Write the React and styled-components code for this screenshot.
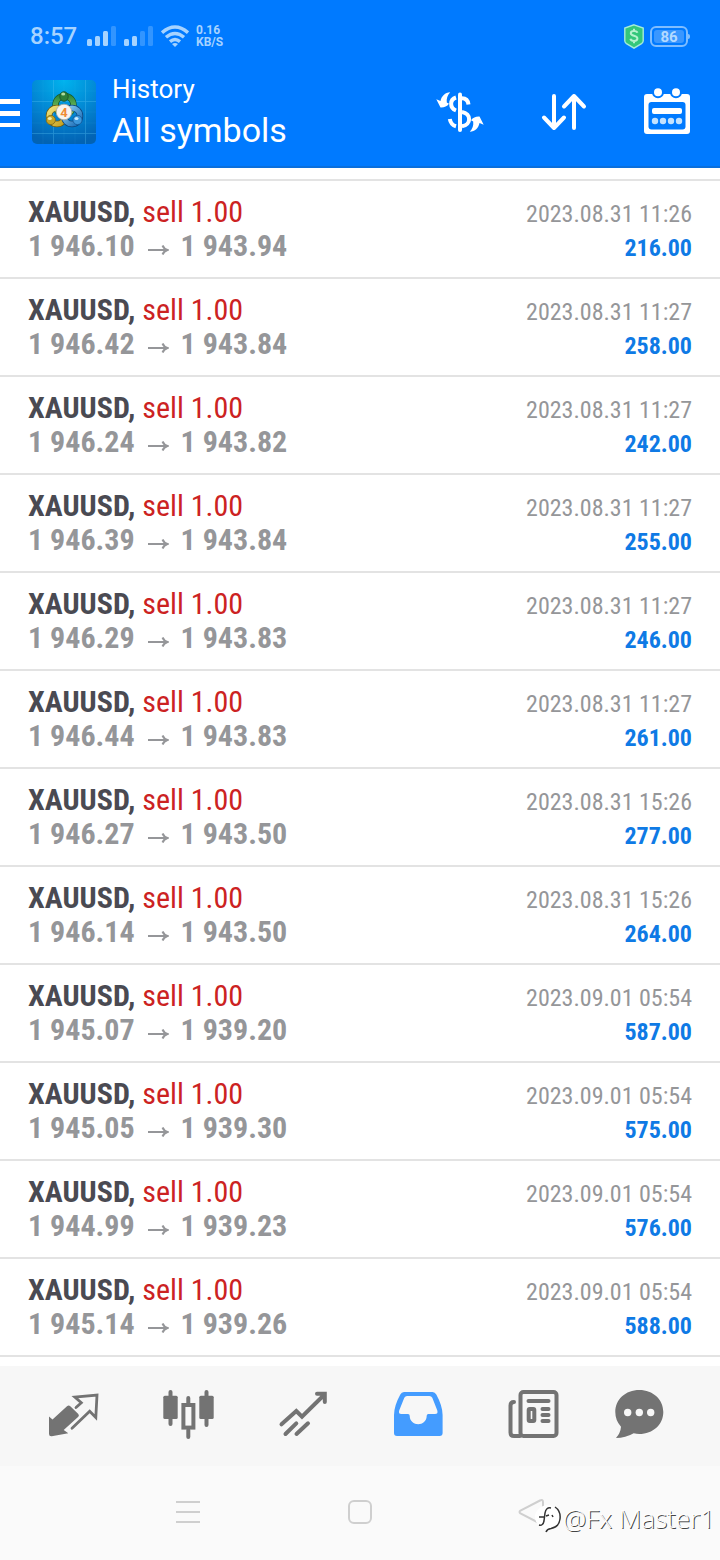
import { useState } from "react"
import styled, { createGlobalStyle } from "styled-components"

const GlobalStyle = createGlobalStyle`
  * {
    box-sizing: border-box;
  }

  body {
    margin: 0;
    background: #ffffff;
    font-family: Roboto, "Liberation Sans", sans-serif;
  }

  button {
    padding: 0;
    border: none;
    background: transparent;
    cursor: pointer;
  }

  svg {
    display: block;
    flex-shrink: 0;
  }
`

const Page = styled.div`
  position: relative;
  min-height: 100vh;
  display: flex;
  flex-direction: column;
`

const Header = styled.header`
  background: #007aff;
  border-bottom: 2px solid #0a6fdc;
`

const StatusBar = styled.div`
  display: flex;
  align-items: center;
  height: 72px;
  padding: 0 32px 0 30px;
  color: #a6d3ff;
`

const Clock = styled.span`
  width: 57px;
  font-size: 24px;
  line-height: 28px;
  font-weight: 500;
`

const StatusIcons = styled.div`
  display: flex;
  align-items: center;
  gap: 8px;
`

const Speed = styled.div`
  margin-left: 7px;
  font-size: 12px;
  line-height: 12px;
  font-weight: 700;
`

const StatusRight = styled.div`
  display: flex;
  align-items: center;
  gap: 6px;
  margin-left: auto;
`

const Battery = styled.div`
  position: relative;
  width: 38px;
  height: 21px;
  padding: 2px;
  border: 2px solid #7fbdff;
  border-radius: 6px;

  &::after {
    content: "";
    position: absolute;
    top: 6px;
    right: -4px;
    width: 2px;
    height: 5px;
    border-radius: 0 2px 2px 0;
    background: #7fbdff;
  }
`

const BatteryLevel = styled.div`
  height: 100%;
  border-radius: 3px;
  background: #3a97ff;
  color: #b4daff;
  font-size: 15px;
  line-height: 14px;
  font-weight: 700;
  text-align: center;
`

const AppBar = styled.div`
  display: flex;
  align-items: center;
  height: 94px;
  padding: 0 24px 14px 0;
`

const MenuButton = styled.button`
  width: 20px;
  height: 64px;
  display: flex;
  align-items: center;
`

const Logo = styled.div`
  margin-left: 12px;
`

const Titles = styled.div`
  flex: 1;
  margin-left: 16px;
  color: #ffffff;
`

const Title = styled.h1`
  margin: 0;
  font-size: 26px;
  line-height: 36px;
  font-weight: 400;
`

const Subtitle = styled.p`
  margin: 0;
  font-size: 34px;
  line-height: 46px;
`

const Actions = styled.div`
  display: flex;
  gap: 48px;
`

const ActionButton = styled.button`
  width: 56px;
  height: 56px;
`

const DealList = styled.ul`
  flex: 1;
  margin: 11px 0 9px;
  padding: 0;
  list-style: none;
  border-top: 2px solid #e3e3e3;
  font-family: "Roboto Condensed", "Liberation Sans Narrow", Roboto, sans-serif;
`

const DealRow = styled.li`
  display: flex;
  justify-content: space-between;
  height: 98px;
  padding: 14px 28px 0;
  border-bottom: 2px solid #e3e3e3;
`

const DealSide = styled.div`
  color: #959699;
  text-align: ${(props) => props.$align || "left"};
`

const Deal = styled.div`
  color: #4a4a52;
  font-size: 30px;
  line-height: 34px;
  font-weight: 700;
`

const Operation = styled.span`
  color: #cc2222;
  font-weight: 400;
`

const Prices = styled.div`
  font-size: 30px;
  line-height: 34px;
  font-weight: 700;
`

const PriceArrow = styled.svg`
  display: inline-block;
  margin: 0 12px;
`

const DealTime = styled.time`
  display: block;
  font-size: 24px;
  line-height: 38px;
`

const Profit = styled.div`
  color: #0f7ae5;
  font-size: 24px;
  line-height: 30px;
  font-weight: 700;
`

const TabBar = styled.nav`
  display: flex;
  height: 100px;
  padding: 0 16px;
  background: #f7f7f7;
`

const TabButton = styled.button`
  flex: 1;
  display: flex;
  align-items: center;
  justify-content: center;
  color: ${(props) => (props.$active ? "#449cff" : "#737373")};
`

const SystemBar = styled.div`
  display: flex;
  align-items: center;
  justify-content: space-around;
  height: 94px;
  padding: 0 102px 2px;
  background: #fafafa;
`

const SystemButton = styled.button`
  width: 28px;
  height: 28px;
`

const Watermark = styled.div`
  position: absolute;
  right: 5px;
  bottom: 24px;
  display: flex;
  align-items: center;
  color: #ffffff;
  font-family: "Open Sans", Lato, sans-serif;
  font-size: 26px;
  line-height: 36px;
  font-weight: 300;
  text-shadow: 1px 1px 0 #444444;
`

const deals = [
  { open: "1 946.10", close: "1 943.94", time: "2023.08.31 11:26", profit: "216.00" },
  { open: "1 946.42", close: "1 943.84", time: "2023.08.31 11:27", profit: "258.00" },
  { open: "1 946.24", close: "1 943.82", time: "2023.08.31 11:27", profit: "242.00" },
  { open: "1 946.39", close: "1 943.84", time: "2023.08.31 11:27", profit: "255.00" },
  { open: "1 946.29", close: "1 943.83", time: "2023.08.31 11:27", profit: "246.00" },
  { open: "1 946.44", close: "1 943.83", time: "2023.08.31 11:27", profit: "261.00" },
  { open: "1 946.27", close: "1 943.50", time: "2023.08.31 15:26", profit: "277.00" },
  { open: "1 946.14", close: "1 943.50", time: "2023.08.31 15:26", profit: "264.00" },
  { open: "1 945.07", close: "1 939.20", time: "2023.09.01 05:54", profit: "587.00" },
  { open: "1 945.05", close: "1 939.30", time: "2023.09.01 05:54", profit: "575.00" },
  { open: "1 944.99", close: "1 939.23", time: "2023.09.01 05:54", profit: "576.00" },
  { open: "1 945.14", close: "1 939.26", time: "2023.09.01 05:54", profit: "588.00" },
]

const SignalIcon = ({ level }) => (
  <svg width="29" height="20" viewBox="0 0 29 20" fill="#a6d3ff">
    {[7, 10, 15, 20].map((h, i) => (
      <rect key={h} x={i * 8} y={20 - h} width="5" height={h} rx="1.5" opacity={i < level ? 1 : 0.3} />
    ))}
  </svg>
)

const WifiIcon = () => (
  <svg width="28" height="22" viewBox="0 0 28 22" fill="none" stroke="#a6d3ff" strokeWidth="3.4">
    <path d="M1 7.6Q14 -3.6 27 7.6" />
    <path d="M5 12.2Q14 4.6 23 12.2" />
    <path d="M9 16.6Q14 12.4 19 16.6" />
    <path d="M11 19Q14 17 17 19L14 22Z" fill="#a6d3ff" stroke="none" />
  </svg>
)

const ShieldIcon = () => (
  <svg width="20" height="25" viewBox="0 0 20 25">
    <path d="M10 .8L19.2 4V17Q19 18.5 17.5 19.6L10 24.2L2.5 19.6Q1 18.5 .8 17V4Z" fill="#34c77b" stroke="#a5ecd8" strokeWidth="1.4" />
    <path d="M13.4 8.8C12.8 6.4 6.8 6.2 6.8 9.2C6.8 12.6 13.4 11 13.4 14.6C13.4 17.8 7 17.6 6.4 14.8M10 4.8V7M10 17V19.2" fill="none" stroke="#b5f2cf" strokeWidth="2" />
  </svg>
)

const MenuIcon = () => (
  <svg width="20" height="30" viewBox="0 0 20 30" fill="#ffffff">
    <rect y="2" width="20" height="5" />
    <rect y="14" width="20" height="5" />
    <rect y="26" width="20" height="4" />
  </svg>
)

const LogoIcon = () => (
  <svg width="64" height="64" viewBox="0 0 64 64">
    <defs>
      <radialGradient id="sky" cx="50%" cy="0%" r="100%">
        <stop offset="0" stopColor="#00b4ee" />
        <stop offset=".55" stopColor="#0286d3" />
        <stop offset="1" stopColor="#0263b4" />
      </radialGradient>
      <linearGradient id="green" x1="0" y1="0" x2="0" y2="1">
        <stop offset="0" stopColor="#2f8a3c" />
        <stop offset="1" stopColor="#8fd06a" />
      </linearGradient>
      <linearGradient id="yellow" x1="0" y1="0" x2="1" y2="1">
        <stop offset="0" stopColor="#f0e27a" />
        <stop offset="1" stopColor="#c39d1c" />
      </linearGradient>
      <linearGradient id="blue" x1="0" y1="0" x2="1" y2="1">
        <stop offset="0" stopColor="#8fd2f6" />
        <stop offset="1" stopColor="#1769b5" />
      </linearGradient>
    </defs>
    <rect width="64" height="64" rx="5" fill="url(#sky)" />
    <path d="M0 21.5H64M0 53.5H64M21.5 0V64M53.5 0V64" stroke="#5cc6f5" strokeWidth=".8" opacity=".4" />
    <path d="M0 11H64M0 32H64M0 43H64M11 0V64M32 0V64M43 0V64" stroke="#5cc6f5" strokeWidth=".5" opacity=".15" />
    <g fill="none">
      <circle cx="32.5" cy="25" r="9" stroke="#17572b" strokeWidth="6.4" />
      <circle cx="32.5" cy="25" r="9" stroke="url(#green)" strokeWidth="5" />
      <circle cx="25" cy="36" r="8" stroke="#6e5c12" strokeWidth="6.4" />
      <circle cx="25" cy="36" r="8" stroke="url(#yellow)" strokeWidth="5" />
      <circle cx="40" cy="36" r="8" stroke="#0d457e" strokeWidth="6.4" />
      <circle cx="40" cy="36" r="8" stroke="url(#blue)" strokeWidth="5" />
    </g>
    <ellipse cx="32" cy="16.5" rx="4.2" ry="4.8" fill="#2d7f38" stroke="#174f29" strokeWidth=".8" />
    <ellipse cx="31.2" cy="14" rx="2" ry="1.6" fill="#b0dca0" />
    <circle cx="18.8" cy="40" r="4.6" fill="#c6a527" stroke="#7e6614" strokeWidth=".8" />
    <ellipse cx="17.8" cy="38.500" rx="2" ry="1.5" fill="#f7edaa" />
    <circle cx="45.500" cy="40" r="4.6" fill="#3c97dc" stroke="#125797" strokeWidth=".8" />
    <ellipse cx="44.500" cy="38.500" rx="2" ry="1.5" fill="#c9eaff" />
    <circle cx="32" cy="32" r="7.8" fill="#f7f4ef" stroke="#aaa9a0" strokeWidth=".8" />
    <text x="32" y="36.500" textAnchor="middle" fontSize="13" fontWeight="700" fill="#ef8b35">
      4
    </text>
  </svg>
)

const BalanceIcon = () => (
  <svg width="56" height="56" viewBox="0 0 56 56" fill="none" stroke="#ffffff" strokeWidth="4">
    <path d="M28 10.500V46" strokeLinecap="round" />
    <path d="M36.500 20.500C36 16 33 14.200 30 14.200M24 13.500C17.500 15.500 17.500 24 24 26.500M30 28C39.500 29.500 39.500 41 30 42.300M17.800 35C18.500 39 21 41.500 24 42.300" />
    <path
      id="turn"
      d="M4.300 15.200L8.500 17C9.500 12 13 8.500 18.200 8.200C15.500 11 14.300 14.500 14.800 18.500L17 19.800Q14 23.800 8.500 23.500Z"
      fill="#ffffff"
      stroke="none"
    />
    <use href="#turn" transform="rotate(180 28 28)" />
  </svg>
)

const SortIcon = () => (
  <svg width="56" height="56" viewBox="0 0 56 56" fill="none" stroke="#ffffff" strokeWidth="4" strokeLinecap="round" strokeLinejoin="round">
    <path d="M18 12V44M8 33.500L18 44L28 33.500" />
    <path d="M38 44V12M28 22.500L38 12L48 22.500" />
  </svg>
)

const CalendarIcon = () => (
  <svg width="56" height="56" viewBox="0 0 56 56" fill="#ffffff">
    <rect x="4" y="10" width="46" height="40" rx="3" />
    <rect x="8.500" y="18" width="37" height="27.500" rx="3" fill="#007aff" />
    <circle cx="18" cy="8.300" r="5" stroke="#007aff" strokeWidth="2" />
    <circle cx="36" cy="8.300" r="5" stroke="#007aff" strokeWidth="2" />
    <rect x="12" y="24" width="30" height="6" rx="2" />
    {[15, 23, 31, 39].map((x) => (
      <circle key={x} cx={x} cy="37" r="3.200" fill="#c4e2ff" />
    ))}
  </svg>
)

const Icon = ({ children }) => (
  <svg width="64" height="64" viewBox="0 0 64 64" fill="none" stroke="currentColor" strokeWidth="4" strokeLinecap="round">
    {children}
  </svg>
)

const QuotesIcon = () => (
  <Icon>
    <path d="M8 32.500L11.500 35.500L26 22.200Q27.800 20.800 29.300 22.200L37.300 30Q38.500 31.500 37.300 32.800L22.700 46L27.300 49.200L10.700 52.300Q8 52.500 8 50Z" fill="currentColor" stroke="none" />
    <path d="M35 23.500L40.300 18.800L33.800 13L56 11L54.800 33.500L48.700 27.300L31 44.300" strokeWidth="2.800" />
  </Icon>
)

const ChartIcon = () => (
  <Icon>
    <path d="M14.500 8V40M50.500 8V41M32.300 14V20M32.300 46V53" />
    <rect x="7.300" y="11.700" width="14.400" height="23.300" rx="1.500" fill="currentColor" stroke="none" />
    <rect x="43.300" y="11.700" width="14.400" height="23.300" rx="1.500" fill="currentColor" stroke="none" />
    <rect x="27.400" y="21" width="10" height="22.600" />
  </Icon>
)

const TradeIcon = () => (
  <Icon>
    <path d="M10.500 40.300L25.300 27L31 32.700L53.500 10.500M46 9.800H53.800V18" />
    <path d="M14.500 50L25.300 39.300M25.500 50L37 39.300" />
  </Icon>
)

const HistoryIcon = () => (
  <Icon>
    <path
      d="M19 8H47.500Q50 8 51.300 10.500Q57.600 22 57.600 31V49Q57.600 52 54.600 52H12Q9 52 9 49V31Q9 22 15.300 10.500Q16.500 8 19 8ZM22 12Q20.300 12 19.300 13.800L14.200 26.500Q13.200 30 16.300 30H23Q24.700 30 24.700 31.800C24.700 43 41.700 43 41.700 31.800Q41.700 30 43.400 30H50Q53.300 30 52.300 26.500L47.300 13.800Q46.300 12 44.500 12Z"
      fill="currentColor"
      fillRule="evenodd"
      stroke="none"
    />
  </Icon>
)

const NewsIcon = () => (
  <Icon>
    <rect x="20.500" y="8" width="36" height="44" rx="3" />
    <path d="M14 18Q10.500 18 10.500 21.500V48.500Q10.500 52 14 52H20" />
    <path d="M28.500 17H48.500M42.500 25H48.500M42.500 31H48.500M42.500 37H48.500" />
    <rect x="28.700" y="25" width="5.600" height="12" rx="1" />
  </Icon>
)

const ChatIcon = () => (
  <Icon>
    <path
      d="M24.300 6C38 6 48.300 15.500 48.300 28S38 50 24.300 50Q21.500 50 18.700 49.200Q10.500 54 1 54Q5.500 49 6 42.700Q.300 36.500 .300 28C.300 15.500 10.500 6 24.300 6Z"
      fill="currentColor"
      stroke="none"
    />
    {[12.7, 24.3, 35.7].map((x) => (
      <circle key={x} cx={x} cy="28.500" r="3.700" fill="#f7f7f7" stroke="none" />
    ))}
  </Icon>
)

const tabs = [
  { id: "quotes", label: "Quotes", icon: QuotesIcon },
  { id: "chart", label: "Chart", icon: ChartIcon },
  { id: "trade", label: "Trade", icon: TradeIcon },
  { id: "history", label: "History", icon: HistoryIcon },
  { id: "news", label: "News", icon: NewsIcon },
  { id: "chat", label: "Chat", icon: ChatIcon },
]

const App = () => {
  const [activeTab, setActiveTab] = useState("history")

  return (
    <>
      <GlobalStyle />
      <Page>
        <Header>
          <StatusBar>
            <Clock>8:57</Clock>
            <StatusIcons>
              <SignalIcon level={3} />
              <SignalIcon level={2} />
              <WifiIcon />
            </StatusIcons>
            <Speed>
              0.16
              <br />
              KB/S
            </Speed>
            <StatusRight>
              <ShieldIcon />
              <Battery>
                <BatteryLevel>86</BatteryLevel>
              </Battery>
            </StatusRight>
          </StatusBar>

          <AppBar>
            <MenuButton aria-label="Menu">
              <MenuIcon />
            </MenuButton>
            <Logo>
              <LogoIcon />
            </Logo>
            <Titles>
              <Title>History</Title>
              <Subtitle>All symbols</Subtitle>
            </Titles>
            <Actions>
              <ActionButton aria-label="Balance">
                <BalanceIcon />
              </ActionButton>
              <ActionButton aria-label="Sort">
                <SortIcon />
              </ActionButton>
              <ActionButton aria-label="Period">
                <CalendarIcon />
              </ActionButton>
            </Actions>
          </AppBar>
        </Header>

        <DealList>
          {deals.map((deal, index) => (
            <DealRow key={index}>
              <DealSide>
                <Deal>
                  XAUUSD, <Operation>sell 1.00</Operation>
                </Deal>
                <Prices>
                  {deal.open}
                  <PriceArrow width="22" height="12" viewBox="0 0 22 12" fill="none" stroke="currentColor" strokeWidth="2">
                    <path d="M1 6H20M15.500 1.500Q17 5 20.500 6Q17 7 15.500 10.500" />
                  </PriceArrow>
                  {deal.close}
                </Prices>
              </DealSide>
              <DealSide $align="right">
                <DealTime>{deal.time}</DealTime>
                <Profit>{deal.profit}</Profit>
              </DealSide>
            </DealRow>
          ))}
        </DealList>

        <TabBar>
          {tabs.map(({ id, label, icon: TabIcon }) => (
            <TabButton key={id} aria-label={label} $active={activeTab === id} onClick={() => setActiveTab(id)}>
              <TabIcon />
            </TabButton>
          ))}
        </TabBar>

        <SystemBar>
          <SystemButton aria-label="Recent apps">
            <svg width="28" height="28" viewBox="0 0 28 28" stroke="#cfcfcf" strokeWidth="2">
              <path d="M2 4H26M2 14H26M2 24H26" />
            </svg>
          </SystemButton>
          <SystemButton aria-label="Home">
            <svg width="28" height="28" viewBox="0 0 28 28" fill="none" stroke="#cfcfcf" strokeWidth="2">
              <rect x="3" y="3" width="22" height="22" rx="5" />
            </svg>
          </SystemButton>
          <SystemButton aria-label="Back">
            <svg width="28" height="28" viewBox="0 0 28 28" fill="none" stroke="#cfcfcf" strokeWidth="2">
              <path d="M22 2.500Q25 1 25 4V24Q25 27 22 25.500L2.500 15.500Q.500 14 2.500 12.500Z" />
            </svg>
          </SystemButton>
        </SystemBar>

        <Watermark>
          <svg width="28" height="32" viewBox="0 0 28 32" fill="none">
            <path d="M13 3C20 3 25 8 25 15S20 26 15 27L12 30L11 27C5 26 0 21 0 15S6 3 13 3Z" fill="#ffffff" />
            <path d="M20 5Q26 9 25 17Q24 25 16 26.500Q12 27 11 30" stroke="#333333" strokeWidth="1.500" />
            <path d="M16 6Q11 5 10 11L9 19Q8 24 4 23M4 15H9M11 14L14 13M17 13L18 15" stroke="#333333" strokeWidth="1.500" />
          </svg>
          @Fx Master1
        </Watermark>
      </Page>
    </>
  )
}

export default App
